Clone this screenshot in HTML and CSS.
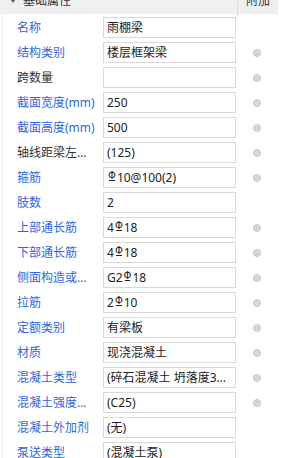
FILE: index.html
```html
<!DOCTYPE html>
<html lang="zh">
<head>
<meta charset="utf-8">
<title>属性</title>
<link rel="stylesheet" href="styles.css">
</head>
<body>
<div class="panel">
  <div class="head">
    <div class="head-main"><span class="tri"></span>基础属性</div>
    <div class="head-extra">附加</div>
  </div>
  <div class="body">
    <div class="row"><div class="lbl blue">名称</div><div class="val">雨棚梁</div><div class="ext"></div></div>
    <div class="row"><div class="lbl blue">结构类别</div><div class="val">楼层框架梁</div><div class="ext"><span class="radio"></span></div></div>
    <div class="row"><div class="lbl">跨数量</div><div class="val"></div><div class="ext"><span class="radio"></span></div></div>
    <div class="row"><div class="lbl blue">截面宽度(mm)</div><div class="val">250</div><div class="ext"><span class="radio"></span></div></div>
    <div class="row"><div class="lbl blue">截面高度(mm)</div><div class="val">500</div><div class="ext"><span class="radio"></span></div></div>
    <div class="row"><div class="lbl">轴线距梁左边线距离(mm)</div><div class="val">(125)</div><div class="ext"><span class="radio"></span></div></div>
    <div class="row"><div class="lbl blue">箍筋</div><div class="val"><span class="rb">Φ</span>10@100(2)</div><div class="ext"><span class="radio"></span></div></div>
    <div class="row"><div class="lbl blue">肢数</div><div class="val">2</div><div class="ext"></div></div>
    <div class="row"><div class="lbl blue">上部通长筋</div><div class="val">4<span class="rb">Φ</span>18</div><div class="ext"><span class="radio"></span></div></div>
    <div class="row"><div class="lbl blue">下部通长筋</div><div class="val">4<span class="rb">Φ</span>18</div><div class="ext"><span class="radio"></span></div></div>
    <div class="row"><div class="lbl blue">侧面构造或受扭筋(总配筋值)</div><div class="val">G2<span class="rb">Φ</span>18</div><div class="ext"><span class="radio"></span></div></div>
    <div class="row"><div class="lbl blue">拉筋</div><div class="val">2<span class="rb">Φ</span>10</div><div class="ext"><span class="radio"></span></div></div>
    <div class="row"><div class="lbl blue">定额类别</div><div class="val">有梁板</div><div class="ext"><span class="radio"></span></div></div>
    <div class="row"><div class="lbl blue">材质</div><div class="val">现浇混凝土</div><div class="ext"><span class="radio"></span></div></div>
    <div class="row"><div class="lbl blue">混凝土类型</div><div class="val">(碎石混凝土 坍落度35~50mm)</div><div class="ext"><span class="radio"></span></div></div>
    <div class="row"><div class="lbl blue">混凝土强度等级</div><div class="val">(C25)</div><div class="ext"><span class="radio"></span></div></div>
    <div class="row"><div class="lbl blue">混凝土外加剂</div><div class="val">(无)</div><div class="ext"></div></div>
    <div class="row"><div class="lbl blue">泵送类型</div><div class="val">(混凝土泵)</div><div class="ext"></div></div>
  </div>
</div>
</body>
</html>
```
FILE: styles.css
```css
html, body {
  margin: 0;
  padding: 0;
  background: #ffffff;
  overflow: hidden;
}
body {
  font-family: "Noto Sans", "Noto Sans CJK SC", sans-serif;
  font-size: 12px;
  color: #222222;
}
.panel {
  width: 278px;
}
.head {
  display: grid;
  grid-template-columns: 237px 41px;
  height: 28px;
  margin-top: -14px;
  background: #f0f0f0;
  line-height: 28px;
  color: #333333;
}
.head-main {
  display: flex;
  align-items: center;
  padding-left: 10px;
  white-space: nowrap;
}
.tri {
  width: 0;
  height: 0;
  border-left: 3px solid transparent;
  border-right: 3px solid transparent;
  border-top: 4px solid #666666;
  margin-right: 7px;
}
.head-extra {
  border-left: 1px solid #dcdcdc;
  text-align: center;
  line-height: 30px;
}
.body {
  margin-left: 2px;
  border-left: 1px solid #ececec;
}
.row {
  display: grid;
  grid-template-columns: 100px 133px 42px;
  height: 25px;
  box-sizing: border-box;
  padding-top: 3px;
  padding-bottom: 1px;
}
.lbl {
  display: block;
  padding-left: 14px;
  padding-right: 7px;
  min-width: 0;
  color: #333333;
  overflow: hidden;
  white-space: nowrap;
  text-overflow: ellipsis;
  line-height: 21px;
}
.lbl.blue {
  color: #2f66e0;
}
.val {
  border: 1px solid #d9d9d9;
  box-sizing: border-box;
  height: 21px;
  line-height: 19px;
  padding: 0 3px;
  white-space: nowrap;
  overflow: hidden;
  text-overflow: ellipsis;
  color: #222222;
}
.rb {
  position: relative;
  display: inline-block;
  font-family: "DejaVu Sans", sans-serif;
  font-size: 10px;
  line-height: 10px;
  vertical-align: 3px;
  margin: 0 1px 0 1px;
}
.rb::after {
  content: "";
  position: absolute;
  left: 1px;
  right: 1px;
  bottom: 0;
  height: 1px;
  background: #222222;
}
.ext {
  display: flex;
  align-items: center;
  justify-content: center;
}
.radio {
  width: 8px;
  height: 8px;
  border-radius: 50%;
  box-sizing: border-box;
  background: #d6d6d6;
  border: 1px solid #c9c9c9;
}
```
